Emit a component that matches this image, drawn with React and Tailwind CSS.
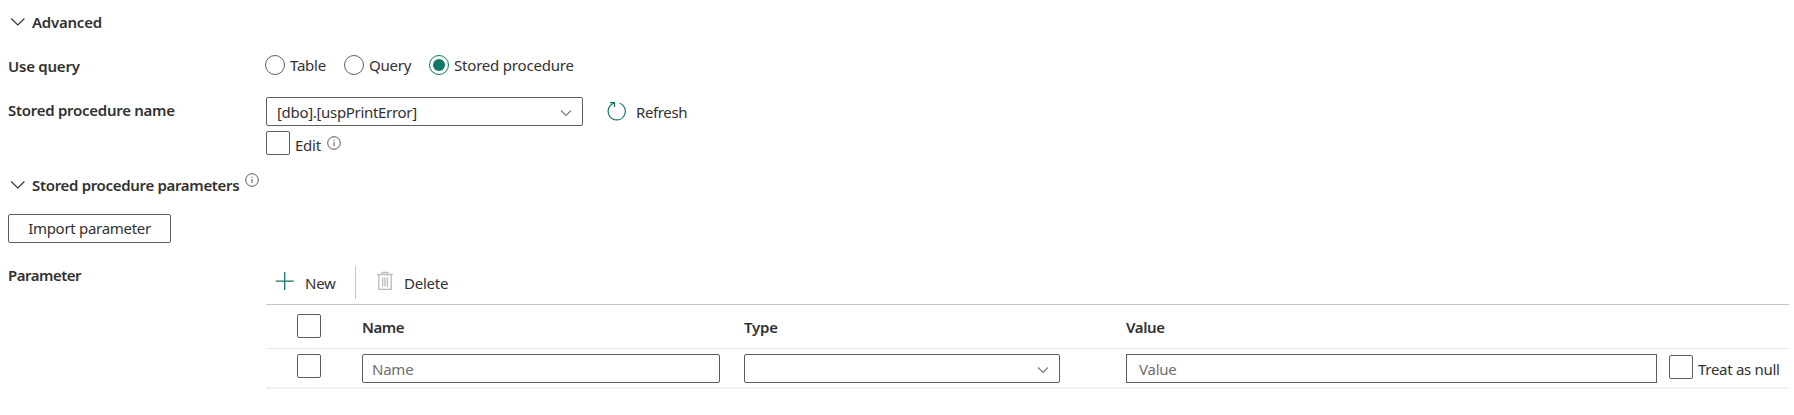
const Text = ({ children, className = '' }) => (
  <span className={`block whitespace-nowrap leading-[22px] ${className}`}>{children}</span>
);

const SectionChevron = () => (
  <svg className="mt-[6px] ml-[10px] h-[10px] w-[16px] shrink-0" viewBox="0 0 16 10" fill="none" stroke="#323130" strokeWidth="1.1">
    <path d="M1.2 1.5 7.8 8 14.4 1.5" />
  </svg>
);

const SelectChevron = () => (
  <svg className="mt-[11px] mr-[10px] h-[8px] w-[12px] shrink-0" viewBox="0 0 12 8" fill="none" stroke="#7a7876" strokeWidth="1.1">
    <path d="M1 1.5 6 6.5 11 1.5" />
  </svg>
);

const Info = ({ className = '' }) => (
  <svg className={`h-[14px] w-[14px] shrink-0 ${className}`} viewBox="0 0 14 14" fill="none" stroke="#484644" strokeWidth="0.9">
    <circle cx="7" cy="7" r="6.3" />
    <path d="M7 6v4.2M7 3.8v1.1" />
  </svg>
);

const Radio = ({ checked }) => (
  <span className={`flex h-5 w-5 shrink-0 items-center justify-center rounded-full border ${checked ? 'border-[#117865]' : 'border-[#605e5c]'}`}>
    {checked && <span className="h-3 w-3 rounded-full bg-[#117865]" />}
  </span>
);

const Checkbox = ({ className = '' }) => (
  <span className={`block h-6 w-6 shrink-0 rounded-[2px] border border-[#605e5c] ${className}`} />
);

export default function App() {
  return (
    <div className="h-[415px] w-[1794px] overflow-hidden bg-white pt-[11px] font-['Noto_Sans','Open_Sans',sans-serif] text-[15px] text-[#323130]">
      <div className="flex h-[22px]">
        <SectionChevron />
        <Text className="ml-[6px] font-semibold tracking-[-0.23px]">Advanced</Text>
      </div>

      <div className="mt-[22px] flex h-[22px] pl-2">
        <Text className="w-[257px] font-semibold tracking-[-0.23px]">Use query</Text>
        <div className="flex w-[79px] gap-[5px]"><Radio /><Text className="-mt-px tracking-[-0.23px]">Table</Text></div>
        <div className="flex w-[85px] gap-[5px]"><Radio /><Text className="-mt-px tracking-[-0.23px]">Query</Text></div>
        <div className="flex gap-[5px]"><Radio checked /><Text className="-mt-px tracking-[-0.2px]">Stored procedure</Text></div>
      </div>

      <div className="mt-5 flex h-[29px] pl-2">
        <Text className="mt-[2px] w-[258px] font-semibold tracking-[-0.27px]">Stored procedure name</Text>
        <div className="flex w-[317px] justify-between rounded-[2px] border border-[#605e5c] pl-[10px]">
          <Text className="mt-[3px] tracking-[-0.32px]">[dbo].[uspPrintError]</Text>
          <SelectChevron />
        </div>
        <svg className="mt-[4px] ml-[24px] h-[20px] w-[20px]" viewBox="0 0 20 20" fill="none" stroke="#117865" strokeWidth="1.2">
          <path d="M12.6 2.2A8.6 8.6 0 1 1 7.2 2.1M2.8 1.6H7.5V6.1" />
        </svg>
        <Text className="mt-[4px] ml-[9px] tracking-[-0.37px]">Refresh</Text>
      </div>

      <div className="mt-[5px] flex h-6 pl-[266px]">
        <Checkbox />
        <Text className="mt-[3px] ml-[5px] w-[32px] tracking-[-0.23px]">Edit</Text>
        <Info className="mt-[5px]" />
      </div>

      <div className="mt-[19px] flex h-[22px]">
        <SectionChevron />
        <Text className="ml-[6px] w-[213px] font-semibold tracking-[-0.32px]">Stored procedure parameters</Text>
        <Info className="mt-[-1px]" />
      </div>

      <div className="mt-[18px] ml-2 flex h-[29px] w-[163px] justify-center rounded-[2px] border border-[#605e5c] pt-[2px]">
        <Text className="tracking-[-0.3px]">Import parameter</Text>
      </div>

      <div className="mt-[21px] flex pl-2">
        <Text className="w-[258px] font-semibold tracking-[-0.5px]">Parameter</Text>
        <div className="w-[1523px]">
          <div className="flex h-10">
            <svg className="mt-[7px] ml-[9px] h-5 w-5" viewBox="0 0 20 20" fill="none" stroke="#117865" strokeWidth="1.3">
              <path d="M.7 10.1h18M9.7 1.1v18" />
            </svg>
            <Text className="mt-2 ml-[10px] w-[50px] tracking-[-0.23px]">New</Text>
            <span className="mt-[2px] h-[33px] w-px bg-[#c8c6c4]" />
            <svg className="mt-[7px] ml-[21px] h-5 w-4" viewBox="0 0 16 20" fill="none" stroke="#bebbb8" strokeWidth="1.3">
              <path d="M.2 3.5h15.6M5.3 3.2V1.4h5.4v1.8M1.8 3.8v14.6h12.4V3.8M5.6 6.5v9M8 6.5v9M10.4 6.5v9" />
            </svg>
            <Text className="mt-2 ml-[11px] tracking-[-0.23px]">Delete</Text>
          </div>
          <div className="flex h-[45px] border-t border-b border-t-[#c8c6c4] border-b-[#edebe9] font-semibold">
            <Checkbox className="mt-[9px] ml-[31px]" />
            <Text className="mt-[11px] ml-[41px] w-[382px] tracking-[-0.4px]">Name</Text>
            <Text className="mt-[11px] w-[382px] tracking-[-0.23px]">Type</Text>
            <Text className="mt-[11px] tracking-[-0.4px]">Value</Text>
          </div>
          <div className="flex h-10 border-b-2 border-[#f1f0ef]">
            <Checkbox className="mt-[5px] ml-[31px]" />
            <div className="mt-[5px] ml-[41px] h-[29px] w-[358px] rounded-[2px] border border-[#605e5c] pt-[3px] pl-[9px] text-[#706e6c]">
              <Text className="tracking-[-0.23px]">Name</Text>
            </div>
            <div className="mt-[5px] ml-[24px] flex h-[29px] w-[316px] justify-end rounded-[2px] border border-[#605e5c]">
              <SelectChevron />
            </div>
            <div className="mt-[5px] ml-[66px] h-[29px] w-[531px] border border-[#605e5c] pt-[3px] pl-[12px] text-[#706e6c]">
              <Text className="tracking-[-0.23px]">Value</Text>
            </div>
            <Checkbox className="mt-[6px] ml-[12px]" />
            <Text className="mt-[9px] ml-[5px] tracking-[-0.3px]">Treat as null</Text>
          </div>
        </div>
      </div>
    </div>
  );
}
